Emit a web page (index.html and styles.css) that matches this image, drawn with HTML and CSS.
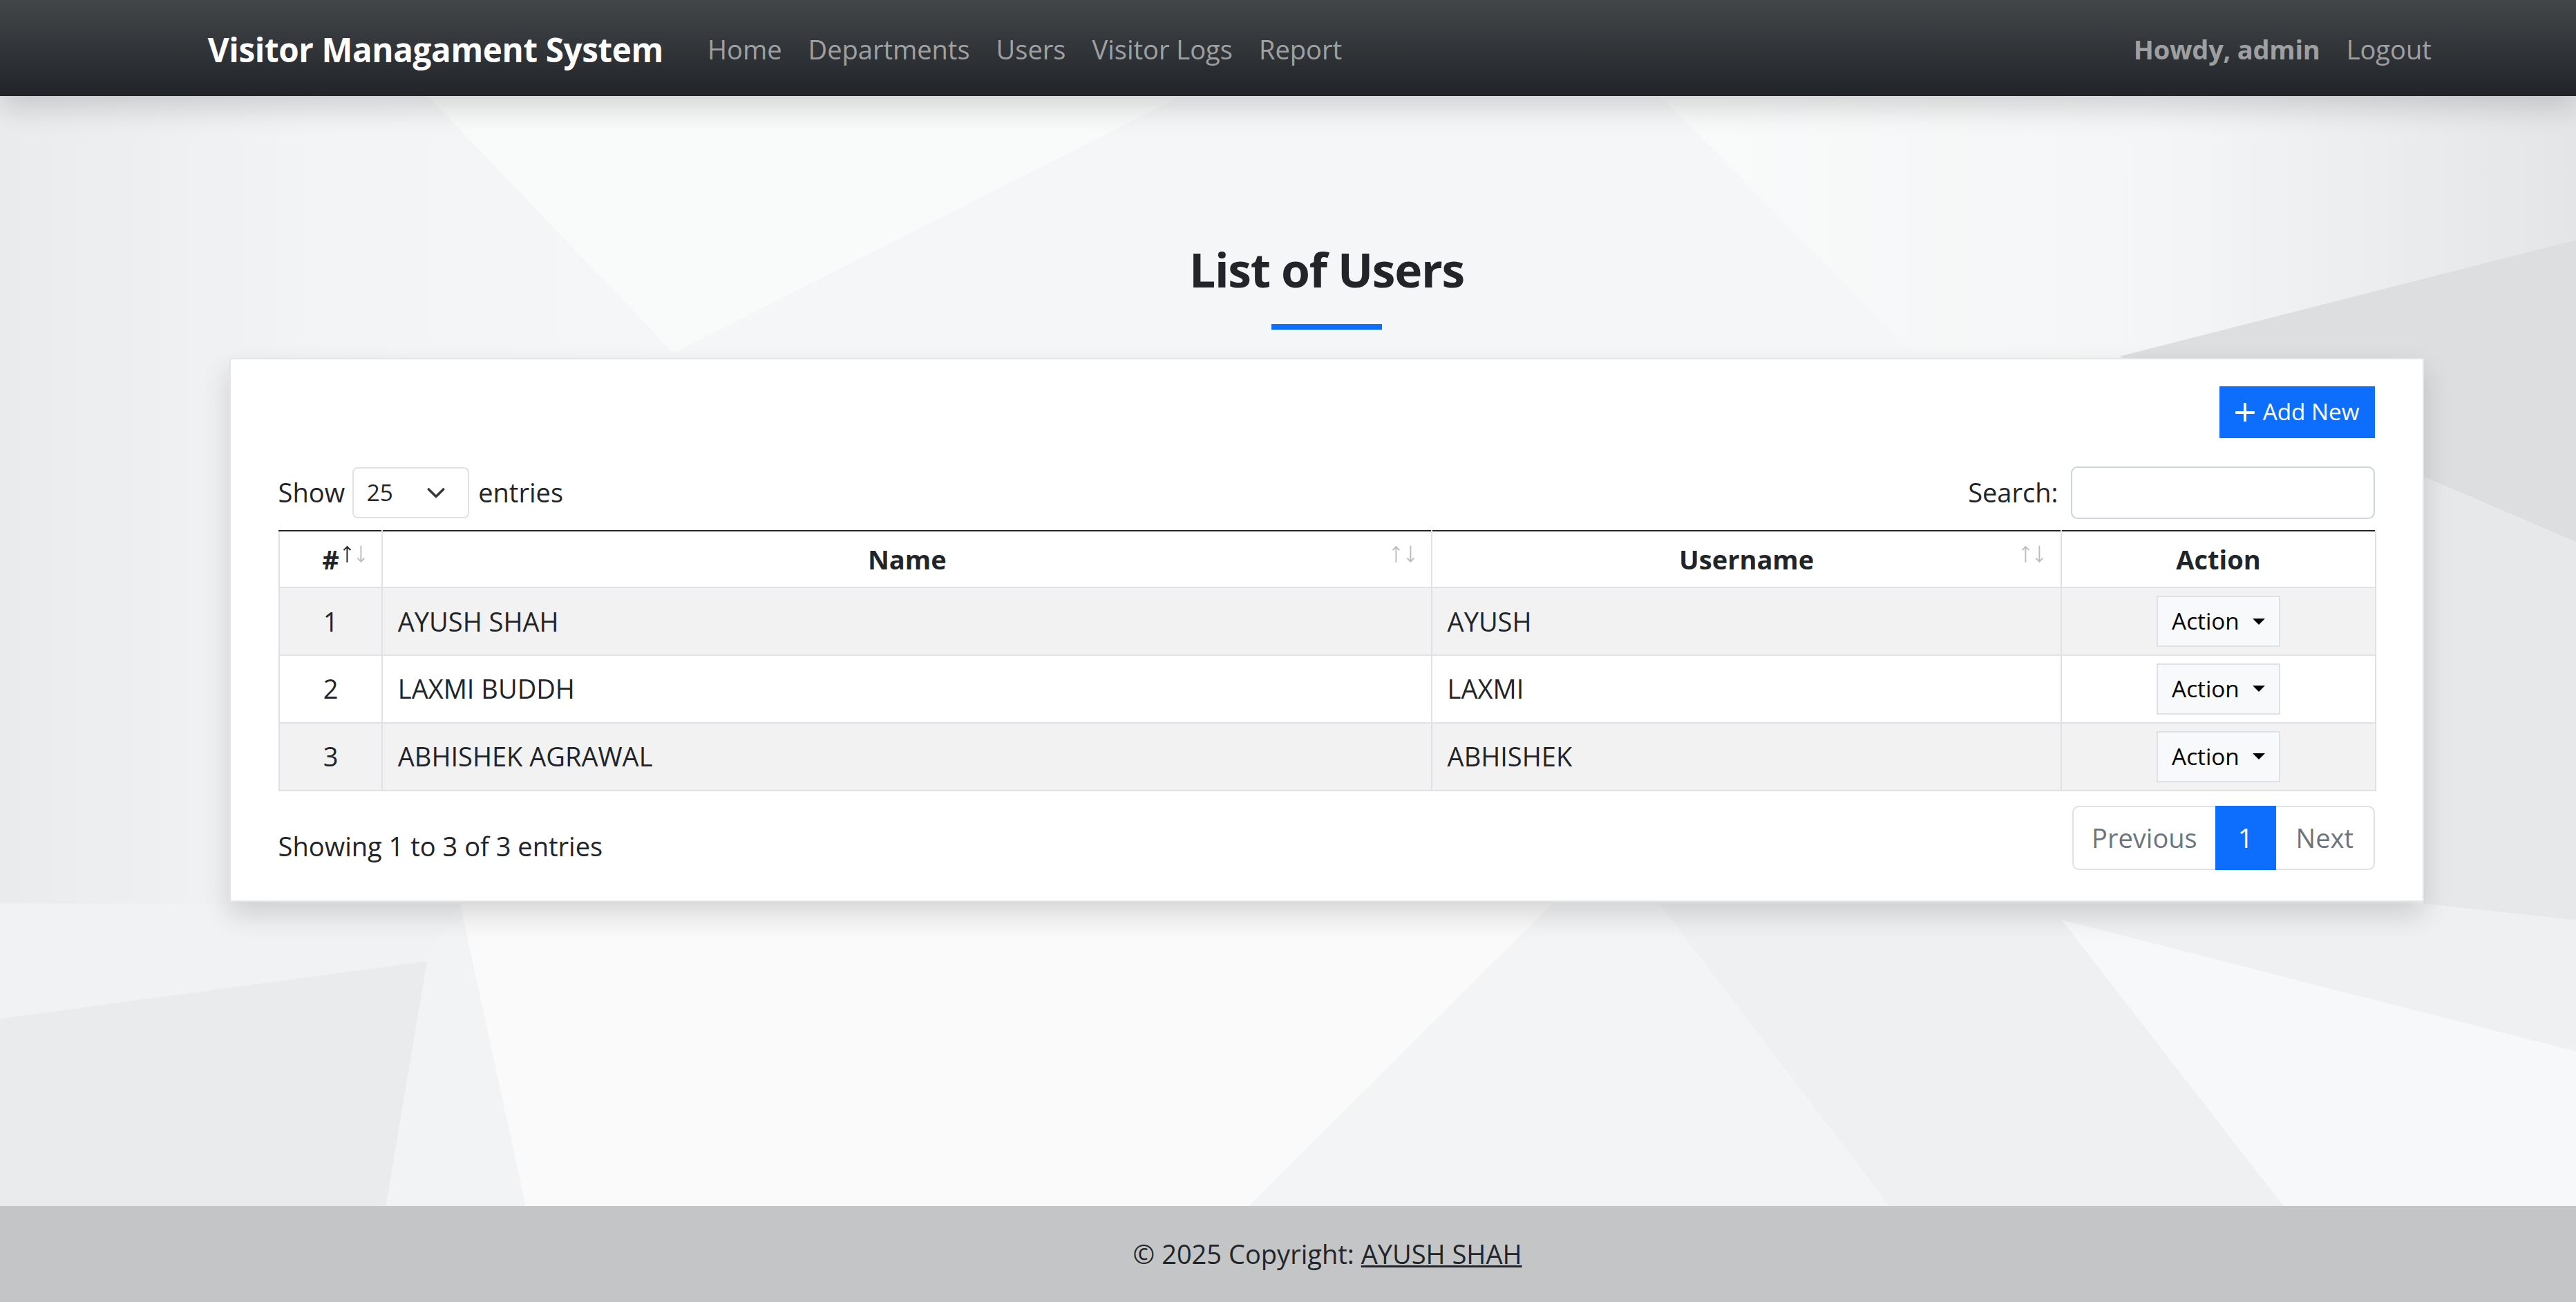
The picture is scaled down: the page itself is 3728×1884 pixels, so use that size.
FILE: index.html
```html
<!DOCTYPE html>
<html lang="en">
<head>
<meta charset="utf-8">
<title>Users - Visitor Managament System</title>
<link rel="stylesheet" href="styles.css">
</head>
<body>
<nav class="navbar">
  <div class="nav-inner">
    <a class="brand" href="#">Visitor Managament System</a>
    <ul class="nav-links">
      <li><a href="#">Home</a></li>
      <li><a href="#">Departments</a></li>
      <li><a href="#">Users</a></li>
      <li><a href="#">Visitor Logs</a></li>
      <li><a href="#">Report</a></li>
    </ul>
    <div class="nav-user">
      <span class="howdy">Howdy, admin</span>
      <a class="logout" href="#">Logout</a>
    </div>
  </div>
</nav>

<main class="main">
  <svg class="bg-art" viewBox="0 58.5 1568 675.5" preserveAspectRatio="none" aria-hidden="true">
    <defs>
      <linearGradient id="gTR" x1="0" y1="0" x2="1" y2="0">
        <stop offset="0" stop-color="#f9fafa"/>
        <stop offset="0.55" stop-color="#f4f5f6"/>
        <stop offset="1" stop-color="#e3e5e7"/>
      </linearGradient>
      <linearGradient id="gL" x1="0" y1="0" x2="1" y2="0">
        <stop offset="0" stop-color="#e9ebed"/>
        <stop offset="0.5" stop-color="#f3f4f5"/>
        <stop offset="1" stop-color="#f5f6f7"/>
      </linearGradient>
    </defs>
    <rect x="0" y="58.5" width="1568" height="676" fill="#f5f6f7"/>
    <polygon points="0,58 260,58 410,215 160,560 0,560" fill="url(#gL)"/>
    <polygon points="260,58 720,58 410,215" fill="#f9fafa"/>
    <polygon points="720,58 1010,58 1165,215 410,215" fill="#f5f6f7"/>
    <polygon points="1010,58 1568,58 1568,146 1290,217 1165,215" fill="url(#gTR)"/>
    <polygon points="1290,217 1568,146 1568,330 1475,290" fill="#dcdee0"/>
    <polygon points="1475,290 1568,330 1568,560 1475,560" fill="#e6e8ea"/>
    <polygon points="0,550 280,550 260,585 0,620" fill="#f1f2f3"/>
    <polygon points="0,620 260,585 235,734 0,734" fill="#e9ebed"/>
    <polygon points="260,585 280,550 320,734 235,734" fill="#f2f3f4"/>
    <polygon points="280,550 945,550 760,734 320,734" fill="#fafafb"/>
    <polygon points="945,550 1010,550 1150,734 760,734" fill="#f3f4f5"/>
    <polygon points="1010,550 1475,550 1568,560 1568,640 1255,560 1390,734 1150,734" fill="#eef0f1"/>
    <polygon points="1255,560 1568,640 1568,734 1390,734" fill="#f7f8f9"/>
  </svg>

  <section class="page">
    <h2 class="page-title">List of Users</h2>
    <div class="title-rule"></div>

    <div class="card">
      <div class="card-tools">
        <a class="btn-add" href="#">
          <svg class="plus" viewBox="0 0 12 12" aria-hidden="true"><path d="M6 0.6v10.8M0.6 6h10.8"/></svg>
          <span>Add New</span>
        </a>
      </div>

      <div class="dt-top">
        <div class="dt-length">
          <span>Show</span>
          <span class="select-sm"><span>25</span><svg viewBox="0 0 16 16" aria-hidden="true"><path d="m2 5 6 6 6-6"/></svg></span>
          <span>entries</span>
        </div>
        <div class="dt-search">
          <span>Search:</span>
          <input class="search-input" type="search" aria-label="Search">
        </div>
      </div>

      <table class="users">
        <colgroup>
          <col class="c-num"><col class="c-name"><col class="c-user"><col class="c-act">
        </colgroup>
        <thead>
          <tr>
            <th class="sortable asc">#
              <svg class="arr arr-up" viewBox="0 0 6 12" aria-hidden="true"><path d="M3 11.6V1M0.7 3.3L3 1l2.3 2.3"/></svg>
              <svg class="arr arr-down" viewBox="0 0 6 12" aria-hidden="true"><path d="M3 0.4V11M0.7 8.7L3 11l2.3-2.3"/></svg>
            </th>
            <th class="sortable">Name
              <svg class="arr arr-up" viewBox="0 0 6 12" aria-hidden="true"><path d="M3 11.6V1M0.7 3.3L3 1l2.3 2.3"/></svg>
              <svg class="arr arr-down" viewBox="0 0 6 12" aria-hidden="true"><path d="M3 0.4V11M0.7 8.7L3 11l2.3-2.3"/></svg>
            </th>
            <th class="sortable">Username
              <svg class="arr arr-up" viewBox="0 0 6 12" aria-hidden="true"><path d="M3 11.6V1M0.7 3.3L3 1l2.3 2.3"/></svg>
              <svg class="arr arr-down" viewBox="0 0 6 12" aria-hidden="true"><path d="M3 0.4V11M0.7 8.7L3 11l2.3-2.3"/></svg>
            </th>
            <th>Action</th>
          </tr>
        </thead>
        <tbody>
          <tr>
            <td class="num">1</td>
            <td>AYUSH SHAH</td>
            <td>AYUSH</td>
            <td class="act"><button class="btn-action" type="button">Action</button></td>
          </tr>
          <tr>
            <td class="num">2</td>
            <td>LAXMI BUDDH</td>
            <td>LAXMI</td>
            <td class="act"><button class="btn-action" type="button">Action</button></td>
          </tr>
          <tr>
            <td class="num">3</td>
            <td>ABHISHEK AGRAWAL</td>
            <td>ABHISHEK</td>
            <td class="act"><button class="btn-action" type="button">Action</button></td>
          </tr>
        </tbody>
      </table>

      <div class="dt-bottom">
        <div class="dt-info">Showing 1 to 3 of 3 entries</div>
        <ul class="pagination">
          <li><a class="page-link prev" href="#">Previous</a></li>
          <li><a class="page-link active" href="#">1</a></li>
          <li><a class="page-link next" href="#">Next</a></li>
        </ul>
      </div>
    </div>
  </section>
</main>

<footer class="footer">
  <span>© 2025 Copyright: <a href="#">AYUSH SHAH</a></span>
</footer>
</body>
</html>
```

FILE: styles.css
```css
html {
  zoom: 2.3776;
}

body {
  margin: 0;
  font-family: "Open Sans", "Noto Sans", "DejaVu Sans", sans-serif;
  font-size: 16px;
  line-height: 1.5;
  color: #212529;
  background: #f5f6f7;
}

/* ---------- navbar ---------- */
.navbar {
  position: relative;
  z-index: 2;
  height: 58.5px;
  background-color: #212529;
  background-image: linear-gradient(180deg, rgba(255, 255, 255, 0.15), rgba(255, 255, 255, 0));
  box-shadow: 0 8px 16px rgba(0, 0, 0, 0.15);
}

.nav-inner {
  box-sizing: border-box;
  height: 100%;
  display: flex;
  align-items: center;
  padding: 1.5px 80px 0 126.5px;
}

.brand {
  color: #fff;
  font-weight: 700;
  font-size: 20px;
  line-height: 30px;
  letter-spacing: -0.15px;
  text-decoration: none;
  margin-right: 19px;
}

.nav-links {
  list-style: none;
  display: flex;
  margin: 0;
  padding: 0;
}

.nav-links a,
.logout {
  display: block;
  padding: 0 8px;
  line-height: 24px;
  color: rgba(255, 255, 255, 0.55);
  text-decoration: none;
}

.nav-user {
  margin-left: auto;
  display: flex;
  align-items: center;
}

.howdy {
  padding: 0 8px;
  font-weight: 700;
  color: rgba(255, 255, 255, 0.55);
  line-height: 24px;
  letter-spacing: -0.1px;
}

/* ---------- main ---------- */
.main {
  position: relative;
  min-height: 675.5px;
  overflow: hidden;
}

.bg-art {
  position: absolute;
  left: 0;
  top: 0;
  width: 100%;
  height: 100%;
  z-index: 0;
}

.page {
  position: relative;
  z-index: 1;
  width: 1336px;
  margin-left: 139.5px;
  padding-top: 87.7px;
}

.page-title {
  margin: 0;
  font-size: 28.5px;
  line-height: 36px;
  font-weight: 700;
  letter-spacing: -0.55px;
  text-align: center;
}

.title-rule {
  width: 67px;
  height: 3.4px;
  margin: 15.1px auto 17px;
  background: #0d6efd;
}

/* ---------- card ---------- */
.card {
  background: #fff;
  border: 1px solid rgba(0, 0, 0, 0.1);
  box-shadow: 0 8px 16px rgba(0, 0, 0, 0.15);
  padding: 16.5px 29px 18.5px;
}

.card-tools {
  display: flex;
  justify-content: flex-end;
}

.btn-add {
  display: inline-flex;
  align-items: center;
  gap: 5px;
  padding: 4.5px 8.7px;
  font-size: 14px;
  line-height: 21px;
  color: #fff;
  background: #0d6efd;
  border: 1px solid #0d6efd;
  text-decoration: none;
}

.plus {
  width: 11.7px;
  height: 11.7px;
  fill: none;
  stroke: #fff;
  stroke-width: 1.7;
  stroke-linecap: round;
}

.dt-top {
  display: flex;
  justify-content: space-between;
  align-items: center;
  margin-top: 17.1px;
}

.dt-length,
.dt-search {
  display: flex;
  align-items: center;
}

.select-sm {
  box-sizing: border-box;
  display: inline-flex;
  align-items: center;
  width: 71px;
  height: 31.5px;
  margin: 0 5.7px 0 4.5px;
  padding-left: 8px;
  font-size: 14px;
  background: #fff;
  border: 1px solid #dee2e6;
  border-radius: 3.2px;
}

.select-sm svg {
  width: 16px;
  height: 12px;
  margin-left: auto;
  margin-right: 11px;
  fill: none;
  stroke: #343a40;
  stroke-width: 2;
  stroke-linecap: round;
  stroke-linejoin: round;
}

.search-input {
  box-sizing: border-box;
  width: 185px;
  height: 32.2px;
  margin: 0 0 0 7.9px;
  padding: 0 8px;
  font: inherit;
  background: #fff;
  border: 1px solid #ced4da;
  border-radius: 4px;
  outline: none;
}

/* ---------- table ---------- */
.users {
  width: 1276.2px;
  margin-top: 6.8px;
  border-collapse: collapse;
  table-layout: fixed;
}

.c-num { width: 63px; }
.c-name { width: 638.8px; }
.c-user { width: 383.1px; }
.c-act { width: 191.3px; }

.users th,
.users td {
  border: 1px solid #dee2e6;
  vertical-align: middle;
}

.users thead th {
  position: relative;
  padding: 4.8px 8px;
  line-height: 24px;
  font-weight: 700;
  text-align: center;
  border-top: 1px solid #212529;
}

.arr {
  position: absolute;
  top: 8.4px;
  width: 5.4px;
  height: 10.8px;
  fill: none;
  stroke: #212529;
  stroke-width: 0.9;
  opacity: 0.3;
}

.arr-up { right: 18.5px; }
.arr-down { right: 10px; }
.asc .arr-up { opacity: 1; }

.users tbody td {
  padding: 4.55px 9px;
  line-height: 24px;
}

.users tbody tr:nth-child(odd) td {
  background: #f2f2f2;
}

.users td.num,
.users td.act {
  text-align: center;
}

.btn-action {
  display: inline-flex;
  align-items: center;
  padding: 4.25px 8.5px;
  font-family: inherit;
  font-size: 14px;
  line-height: 21px;
  color: #000;
  background: #f8f9fa;
  border: 1px solid #dee2e6;
  border-radius: 0;
}

.btn-action::after {
  content: "";
  margin-left: 8px;
  border-top: 0.3em solid #000;
  border-left: 0.3em solid transparent;
  border-right: 0.3em solid transparent;
}

/* ---------- bottom ---------- */
.dt-bottom {
  display: flex;
  justify-content: space-between;
  align-items: flex-start;
  margin-top: 9.2px;
}

.dt-info {
  padding-top: 12.6px;
  line-height: 24px;
}

.pagination {
  display: flex;
  list-style: none;
  margin: 0;
  padding: 0;
}

.page-link {
  box-sizing: border-box;
  display: block;
  height: 39px;
  padding: 6.5px 0;
  line-height: 24px;
  text-align: center;
  color: #6c757d;
  text-decoration: none;
  background: #fff;
  border: 1px solid #dee2e6;
  margin-left: -1px;
}

.page-link.prev {
  width: 88px;
  margin-left: 0;
  border-radius: 4px 0 0 4px;
}

.page-link.active {
  position: relative;
  width: 37.1px;
  color: #fff;
  background: #0d6efd;
  border-color: #0d6efd;
}

.page-link.next {
  width: 61.3px;
  border-radius: 0 4px 4px 0;
}

/* ---------- footer ---------- */
.footer {
  box-sizing: border-box;
  height: 58.4px;
  display: flex;
  align-items: center;
  justify-content: center;
  padding-left: 48px;
  background: #c4c5c7;
  line-height: 24px;
}

.footer a {
  color: #212529;
  text-decoration: underline;
}
```
